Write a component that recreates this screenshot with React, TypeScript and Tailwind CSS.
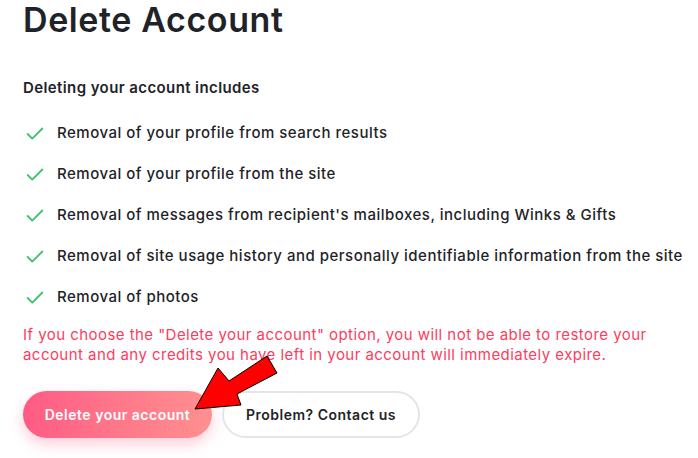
import { Check } from 'lucide-react';

const items = [
  'Removal of your profile from search results',
  'Removal of your profile from the site',
  "Removal of messages from recipient's mailboxes, including Winks & Gifts",
  'Removal of site usage history and personally identifiable information from the site',
  'Removal of photos',
];

export default function App() {
  return (
    <div className="relative w-[698px] h-[458px] overflow-hidden bg-white font-['Inter',sans-serif] text-[#1f2328]">
      <div className="pl-[23px] pr-[8px]">
        <h1 className="text-[34px] leading-[40px] font-semibold tracking-[0.6px]">Delete Account</h1>

        <p className="mt-[38px] text-[15px] leading-[20px] font-semibold tracking-[0.4px]">Deleting your account includes</p>

        <ul className="mt-[25px] flex flex-col gap-[20px]">
          {items.map((item) => (
            <li key={item} className="flex items-center h-[21px] text-[15px] font-medium tracking-[0.5px]">
              <Check className="w-[22px] h-[22px] ml-[1px] mr-[11px] text-[#3cc46b]" strokeWidth={2} />
              <span>{item}</span>
            </li>
          ))}
        </ul>

        <p className="mt-[17px] text-[15px] leading-[20px] tracking-[0.45px] text-[#fb3d60]">
          If you choose the "Delete your account" option, you will not be able to restore your
          <br />
          account and any credits you have left in your account will immediately expire.
        </p>

        <div className="mt-[26px] flex gap-[10px]">
          <button className="w-[189px] h-[47px] rounded-full bg-gradient-to-r from-[#ff5a84] to-[#ff9090] text-white text-[14px] font-semibold tracking-[0.5px] shadow-[0_6px_14px_rgba(255,90,132,0.3)]">
            Delete your account
          </button>
          <button className="w-[198px] h-[47px] rounded-full border-2 border-[#e3e5ea] bg-white text-[#1f2328] text-[14px] font-semibold tracking-[0.5px]">
            Problem? Contact us
          </button>
        </div>
      </div>

      <svg className="absolute left-0 top-0 pointer-events-none" width="698" height="458" viewBox="0 0 698 458">
        <polygon
          points="195,409 218,368 229,381 267,356 277,373 237,394 241,405"
          fill="#ff0000"
          stroke="#000"
          strokeWidth="1"
          strokeLinejoin="miter"
        />
      </svg>
    </div>
  );
}
